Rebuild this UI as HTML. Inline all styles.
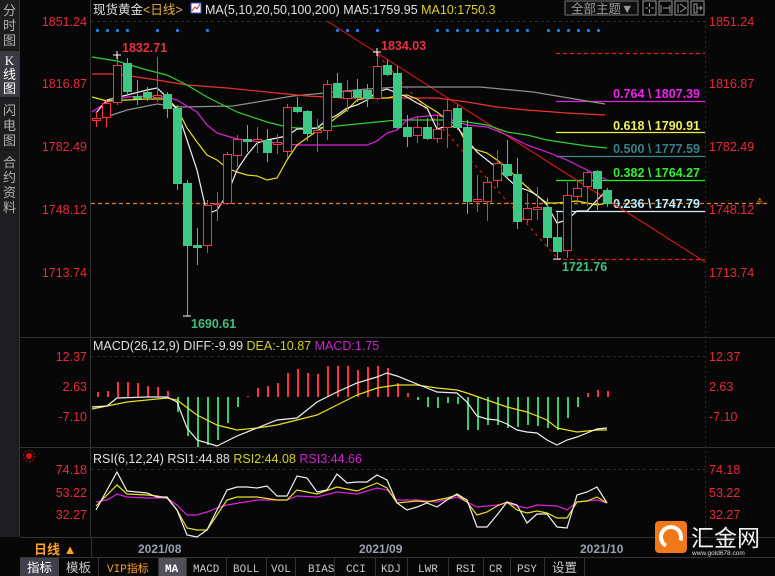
<!DOCTYPE html>
<html><head><meta charset="utf-8">
<style>
html,body{margin:0;padding:0;background:#070707;width:775px;height:576px;overflow:hidden;font-family:"Liberation Sans","Noto Sans CJK SC",sans-serif}
svg{display:block}
</style></head>
<body>
<svg id="s" width="775" height="576" viewBox="0 0 775 576" xmlns="http://www.w3.org/2000/svg" font-family="Liberation Sans, Noto Sans CJK SC, sans-serif">
<rect width="775" height="576" fill="#070707"/>
<rect x="0" y="0" width="19" height="537" fill="#1e1e20"/>
<rect x="0" y="51" width="19" height="46" fill="#3a3a42"/>
<line x1="0" y1="50" x2="19" y2="50" stroke="#111"/>
<line x1="0" y1="98" x2="19" y2="98" stroke="#111"/>
<line x1="0" y1="150" x2="19" y2="150" stroke="#111"/>
<line x1="19.5" y1="0" x2="19.5" y2="537" stroke="#333"/>
<g font-size="13" fill="#b0b0b0" text-anchor="middle">
<text x="9.5" y="15">分</text><text x="9.5" y="30">时</text><text x="9.5" y="45">图</text>
<text x="9.5" y="65" fill="#fff" font-family="Liberation Serif, serif">K</text><text x="9.5" y="79" fill="#fff">线</text><text x="9.5" y="93" fill="#fff">图</text>
<text x="9.5" y="115">闪</text><text x="9.5" y="130">电</text><text x="9.5" y="145">图</text>
<text x="9.5" y="167">合</text><text x="9.5" y="182">约</text><text x="9.5" y="197">资</text><text x="9.5" y="212">料</text>
</g>
<line x1="90.5" y1="0" x2="90.5" y2="537" stroke="#333"/>
<line x1="20" y1="337.5" x2="775" y2="337.5" stroke="#333"/>
<line x1="20" y1="447.5" x2="775" y2="447.5" stroke="#333"/>
<line x1="20" y1="537.5" x2="775" y2="537.5" stroke="#333"/>
<line x1="20" y1="557.5" x2="775" y2="557.5" stroke="#333"/>
<line x1="705.5" y1="21" x2="705.5" y2="537" stroke="#2a2a2a" stroke-dasharray="2,3"/>
<g stroke="#2c2c2c" stroke-dasharray="3,3">
<line x1="91" y1="21.5" x2="705" y2="21.5"/>
<line x1="91" y1="356.5" x2="705" y2="356.5"/>
<line x1="91" y1="469.5" x2="705" y2="469.5"/>
</g>
<g font-size="12.5" fill="#e8283c">
<g text-anchor="end">
<text x="87" y="26">1851.24</text><text x="87" y="88">1816.87</text><text x="87" y="151">1782.49</text><text x="87" y="214">1748.12</text><text x="87" y="277">1713.74</text>
<text x="87" y="361">12.37</text><text x="87" y="391">2.63</text><text x="87" y="421">-7.10</text>
<text x="87" y="474">74.18</text><text x="87" y="497">53.22</text><text x="87" y="519">32.27</text>
</g>
<text x="709" y="26">1851.24</text><text x="709" y="88">1816.87</text><text x="709" y="151">1782.49</text><text x="709" y="214">1748.12</text><text x="709" y="277">1713.74</text>
<text x="709" y="361">12.37</text><text x="709" y="391">2.63</text><text x="709" y="421">-7.10</text>
<text x="709" y="474">74.18</text><text x="709" y="497">53.22</text><text x="709" y="519">32.27</text>
</g>
<text x="93" y="14" font-size="12.5" fill="#e0e0e0">现货黄金<tspan fill="#e8b040">&lt;日线&gt;</tspan></text>
<rect x="191" y="3" width="10" height="10" fill="#fff" stroke="#3050c0"/>
<polyline points="192,11 195,7 197,9 200,4" fill="none" stroke="#d02020"/>
<text x="205" y="14" font-size="12.5" fill="#e0e0e0">MA(5,10,20,50,100,200)  MA5:1759.95 <tspan fill="#e0d020">MA10:1750.3</tspan></text>
<rect x="565" y="1" width="73" height="14" fill="#101010" stroke="#777"/>
<text x="571" y="13" font-size="12.5" fill="#999">全部主题▼</text>
<g fill="none" stroke="#999">
<rect x="643" y="1" width="13" height="14"/><rect x="659" y="1" width="13" height="14"/><rect x="675" y="1" width="13" height="14"/><rect x="691" y="1" width="13" height="14"/>
<path d="M649.5 3v4M649.5 9v4M645 8h3M651 8h3M661 5v8M663 8h7M670 5v8M678 4v9M680 4l6 4-6 4M694 4v9h3v-9zM697 8h5M700 6l2 2-2 2"/>
</g>
<g stroke-width="1.2">
<line x1="556" y1="53.5" x2="705" y2="53.5" stroke="#e02020" stroke-dasharray="4,3"/>
<line x1="556" y1="101.5" x2="705" y2="101.5" stroke="#e020e0"/>
<line x1="556" y1="132.5" x2="705" y2="132.5" stroke="#f0f040"/>
<line x1="556" y1="156.5" x2="705" y2="156.5" stroke="#3a8890"/>
<line x1="556" y1="180.5" x2="705" y2="180.5" stroke="#20f020"/>
<line x1="556" y1="211.5" x2="705" y2="211.5" stroke="#d0f0ff"/>
<line x1="556" y1="259.5" x2="705" y2="259.5" stroke="#e02020" stroke-dasharray="4,3"/>
<line x1="91" y1="203.5" x2="770" y2="203.5" stroke="#e08020" stroke-dasharray="4,3"/>
</g>
<text x="756" y="205" font-size="9" fill="#e08020">≛</text>
<g font-size="12.5" font-weight="bold" text-anchor="end">
<text x="700" y="98" fill="#f020f0">0.764 \ 1807.39</text>
<text x="700" y="130" fill="#f0f060">0.618 \ 1790.91</text>
<text x="700" y="153" fill="#3a7e88">0.500 \ 1777.59</text>
<text x="700" y="177" fill="#30f030">0.382 \ 1764.27</text>
<text x="700" y="208" fill="#b8ecff">0.236 \ 1747.79</text>
</g>
<line x1="327" y1="21" x2="705" y2="262" stroke="#f01818"/>
<line x1="378" y1="55" x2="557" y2="258" stroke="#f01818" stroke-dasharray="3,4"/>
<g id="ma"></g>
<g id="cd"></g>
<g id="md"></g>
<g font-size="12.5" font-weight="bold">
<text x="122" y="52" fill="#e83040">1832.71</text>
<text x="381" y="50" fill="#e83040">1834.03</text>
<text x="191" y="328" fill="#40c080">1690.61</text>
<text x="562" y="271" fill="#40c080">1721.76</text>
</g>
<g stroke="#fff"><path d="M113 55h8M117 51v8M373 52h8M377 48v8M183 316h8M553 259h8"/></g>
<text x="93" y="350" font-size="12.5" fill="#e0e0e0">MACD(26,12,9) DIFF:-9.99 <tspan fill="#d0d020">DEA:-10.87</tspan> <tspan fill="#d020d0">MACD:1.75</tspan></text>
<text x="93" y="463" font-size="12.5" fill="#e0e0e0">RSI(6,12,24) RSI1:44.88 <tspan fill="#d0d020">RSI2:44.08</tspan> <tspan fill="#d020d0">RSI3:44.66</tspan></text>
<circle cx="29" cy="456" r="3" fill="#e01010"/><circle cx="29" cy="456" r="5.5" fill="none" stroke="#e01010" stroke-dasharray="1.5,2"/>
<text x="34" y="554" font-size="13" fill="#ffa020" font-weight="bold">日线 ▲</text>
<line x1="91.5" y1="538" x2="91.5" y2="557" stroke="#333"/>
<g font-size="12" fill="#9aa0b0" font-weight="bold">
<text x="138" y="553">2021/08</text><text x="359" y="553">2021/09</text><text x="580" y="553">2021/10</text>
</g>
<rect x="20" y="558" width="39" height="18" fill="#40404a"/>
<rect x="158" y="558" width="28" height="18" fill="#505058"/>
<g stroke="#333"><path d="M98.5 558v18M158.5 558v18M186.5 558v18M226.5 558v18M266.5 558v18M295.5 558v18M334.5 558v18M375.5 558v18M407.5 558v18M448.5 558v18M483.5 558v18M510.5 558v18M544.5 558v18M584.5 558v18"/></g>
<g font-size="12.5" fill="#c8c8c8">
<text x="27" y="572" fill="#fff">指标</text><text x="66" y="572">模板</text>
</g>
<g font-size="11" fill="#c8c8c8" font-family="Liberation Mono, monospace">
<text x="107" y="572" fill="#ffa020" font-family="Liberation Mono, Noto Sans CJK SC, monospace">VIP指标</text>
<text x="165" y="572" fill="#fff" font-weight="bold">MA</text>
<text x="193" y="572">MACD</text><text x="233" y="572">BOLL</text><text x="271" y="572">VOL</text><text x="308" y="572">BIAS</text>
<text x="346" y="572">CCI</text><text x="381" y="572">KDJ</text><text x="418" y="572">LWR</text><text x="456" y="572">RSI</text>
<text x="489" y="572">CR</text><text x="517" y="572">PSY</text>
</g>
<text x="552" y="572" font-size="12.5" fill="#c8c8c8">设置</text>
<rect x="655" y="521" width="32" height="32" rx="4" fill="#f07818"/>
<circle cx="671" cy="537" r="10" fill="none" stroke="#fff" stroke-width="4" stroke-dasharray="45,20" transform="rotate(120 671 537)"/>
<text x="691" y="546" font-size="23" fill="#f0f0f0">汇金网</text>
<text x="692" y="555" font-size="6.5" fill="#ddd">www.gold678.com</text>
</svg>
<script>
var NS="http://www.w3.org/2000/svg";
function el(p,n,a){var e=document.createElementNS(NS,n);for(var k in a)e.setAttribute(k,a[k]);p.appendChild(e);return e;}
function pl(p,pts,c){el(p,"polyline",{points:pts.map(function(q){return q.join(",")}).join(" "),fill:"none",stroke:c,"stroke-width":1.2});}
var ma=document.getElementById("ma"),cd=document.getElementById("cd"),md=document.getElementById("md");
pl(ma,[[106,117],[127,110],[157,104],[180,107],[233,106],[293,96],[367,89],[400,87],[480,87],[533,92],[605,104]],"#909090");
pl(ma,[[92,74],[117,74],[157,80],[187,85],[227,88],[267,92],[307,96],[347,98],[387,98],[437,98],[467,102],[497,107],[527,110],[567,113],[605,115]],"#f03030");
pl(ma,[[92,57],[117,61],[147,70],[167,75],[187,85],[207,97],[237,112],[267,122],[287,127],[297,128],[317,128],[337,126],[367,123],[397,120],[427,120],[447,120],[467,122],[487,125],[507,132],[527,135],[547,140],[567,143],[587,146],[607,148]],"#30d030");
pl(ma,[[92,112],[107,102],[127,97],[147,96],[167,97],[177,100],[187,106],[197,112],[207,125],[217,133],[237,139],[257,141],[277,143],[297,145],[317,145],[337,145],[367,145],[377,141],[387,133],[397,130],[407,120],[417,117],[437,115],[447,118],[467,125],[487,127],[507,135],[527,145],[547,152],[567,160],[587,170],[607,180]],"#e020e0");
pl(ma,[[92,97],[107,101],[127,100],[147,99],[167,99],[177,108],[187,128],[197,142],[207,155],[217,160],[227,168],[237,172],[247,175],[257,176],[267,180],[277,178],[287,160],[297,145],[307,138],[317,131],[327,125],[337,117],[347,110],[357,100],[367,98],[377,98],[387,98],[397,96],[407,95],[417,99],[427,106],[437,112],[447,120],[457,125],[467,145],[477,150],[487,153],[497,160],[507,168],[517,178],[527,187],[537,196],[547,203],[557,203],[567,202],[577,201],[587,203],[597,205],[607,203]],"#e8e020");
pl(ma,[[96,113],[107,100],[127,95],[147,90],[157,88],[167,97],[177,110],[187,140],[197,170],[207,214],[217,210],[227,195],[237,170],[247,155],[257,143],[267,140],[287,136],[297,129],[307,129],[317,128],[327,120],[337,115],[347,108],[357,105],[367,100],[377,92],[387,89],[397,93],[407,97],[417,103],[427,108],[437,129],[447,126],[457,127],[467,140],[477,152],[487,160],[497,168],[507,178],[517,187],[527,190],[537,195],[547,205],[557,223],[567,220],[577,211],[587,211],[597,200],[607,190]],"#f0f0f0");
var C=[[96,118,120,112,127,1],[106,103,117,100,127,1],[117,65,102,55,105,1],[127,63,91,58,95,0],[137,96,98,80,105,0],[147,92,97,87,101,0],[157,95,97,57,102,1],[167,94,108,92,118,0],[177,108,183,105,190,0],[187,183,245,180,316,0],[197,245,247,228,265,0],[207,205,245,200,253,1],[217,203,204,192,221,1],[227,154,203,152,205,1],[237,139,155,135,167,1],[247,139,141,125,152,0],[257,139,141,127,153,1],[267,140,152,129,162,0],[277,142,144,134,154,1],[287,107,151,104,158,1],[297,107,111,97,113,0],[307,111,133,110,141,0],[317,130,132,119,152,1],[327,84,130,80,140,1],[337,83,97,73,97,0],[347,91,98,80,112,1],[357,90,97,79,102,0],[367,90,98,84,107,0],[377,66,98,52,100,1],[387,65,74,60,76,0],[397,73,127,66,129,0],[407,127,136,115,147,0],[417,127,135,117,143,1],[427,127,138,118,140,0],[437,129,138,116,143,1],[447,110,127,100,148,1],[457,108,127,105,130,0],[467,127,201,120,214,0],[477,199,201,175,212,1],[487,182,201,177,221,1],[497,163,180,150,188,1],[507,164,175,140,177,0],[517,174,221,158,229,0],[527,208,219,193,223,1],[537,207,209,187,220,1],[547,207,237,198,247,0],[557,237,251,212,258,0],[567,195,250,182,258,1],[577,188,196,180,204,1],[587,172,186,170,206,1],[597,171,188,170,210,0],[607,190,203,188,207,0]];
C.forEach(function(c){var col=c[5]?"#ff3040":"#3cc882";
el(cd,"line",{x1:c[0]+.5,y1:c[3],x2:c[0]+.5,y2:c[1],stroke:col});
el(cd,"line",{x1:c[0]+.5,y1:c[2],x2:c[0]+.5,y2:c[4],stroke:col});
var h=Math.max(c[2]-c[1],1);
if(c[5])el(cd,"rect",{x:c[0]-3.5,y:c[1]+.5,width:8,height:h,fill:"#070707",stroke:col});
else el(cd,"rect",{x:c[0]-4,y:c[1],width:9,height:h+1,fill:col});});
[97,107,117,127,157,177,207,337,347,357,377,437,447,457,467,477,487,497,507,517,527,548,558,568,578,588,598].forEach(function(x){el(cd,"circle",{cx:x+.5,cy:30.5,r:1.6,fill:"#2080e0"});});
var Z=397;
var H=[[97,392],[107,391],[117,382],[127,382],[137,383],[147,386],[157,387],[167,391],[177,412],[187,436],[197,447],[207,445],[217,440],[227,423],[237,407],[247,396],[257,388],[267,386],[277,383],[287,373],[297,369],[307,373],[317,374],[327,366],[337,366],[347,366],[357,370],[367,367],[377,366],[387,368],[397,383],[407,393],[417,400],[427,407],[437,408],[447,403],[457,404],[467,430],[477,430],[487,425],[497,425],[507,428],[517,427],[527,425],[537,426],[547,428],[557,430],[567,418],[577,407],[587,393],[597,390],[607,391]];
H.forEach(function(h){var up=h[1]<Z;el(md,"rect",{x:h[0],y:Math.min(Z,h[1]),width:2,height:Math.abs(Z-h[1])||1,fill:up?"#ff3040":"#30d070"});});
pl(md,[[92,409],[127,402],[167,398],[177,400],[197,415],[217,425],[237,430],[257,428],[277,425],[297,420],[317,415],[337,405],[357,395],[377,388],[397,385],[417,385],[437,388],[457,390],[467,393],[487,400],[507,407],[527,412],[547,420],[557,428],[567,430],[577,432],[587,431],[597,430],[607,430]],"#e8e020");
pl(md,[[92,407],[107,406],[117,398],[147,397],[167,397],[177,402],[187,428],[197,440],[217,446],[237,436],[257,428],[277,420],[297,418],[317,402],[337,392],[357,383],[377,377],[387,373],[397,376],[417,384],[437,392],[457,393],[467,402],[477,416],[487,419],[497,420],[507,424],[517,430],[527,432],[537,433],[547,440],[557,445],[567,440],[577,437],[587,433],[597,429],[607,428]],"#f0f0f0");
pl(md,[[96,502],[107,500],[117,494],[127,497],[147,498],[167,498],[177,505],[187,515],[197,515],[207,512],[217,508],[227,505],[257,500],[287,500],[297,496],[317,497],[337,492],[357,494],[377,488],[387,490],[397,500],[417,500],[437,502],[457,497],[467,502],[477,507],[497,505],[507,503],[517,506],[527,508],[537,505],[557,506],[567,510],[577,502],[597,500],[607,503]],"#e020e0");
pl(md,[[96,506],[117,485],[127,494],[147,495],[157,496],[167,498],[177,510],[187,528],[197,530],[207,530],[217,515],[227,500],[237,497],[257,497],[277,500],[287,500],[297,490],[317,494],[337,487],[357,491],[377,483],[387,488],[397,503],[417,501],[427,502],[437,500],[447,498],[457,495],[467,502],[477,515],[487,512],[497,506],[507,502],[517,510],[527,513],[537,511],[547,513],[557,518],[567,518],[577,502],[587,501],[597,497],[607,503]],"#e8e020");
pl(md,[[96,510],[107,490],[117,472],[127,491],[137,492],[147,493],[157,497],[167,497],[177,510],[187,535],[197,537],[207,530],[217,510],[227,490],[237,487],[247,487],[257,488],[267,486],[277,496],[287,496],[297,476],[307,478],[317,492],[327,490],[337,474],[347,483],[357,482],[367,482],[377,475],[387,480],[397,503],[407,510],[417,507],[427,503],[437,507],[447,500],[457,494],[467,500],[477,527],[487,527],[497,515],[507,502],[517,505],[527,523],[537,514],[547,514],[557,527],[567,528],[577,495],[587,492],[597,487],[607,503]],"#f0f0f0");
</script>
</body></html>
